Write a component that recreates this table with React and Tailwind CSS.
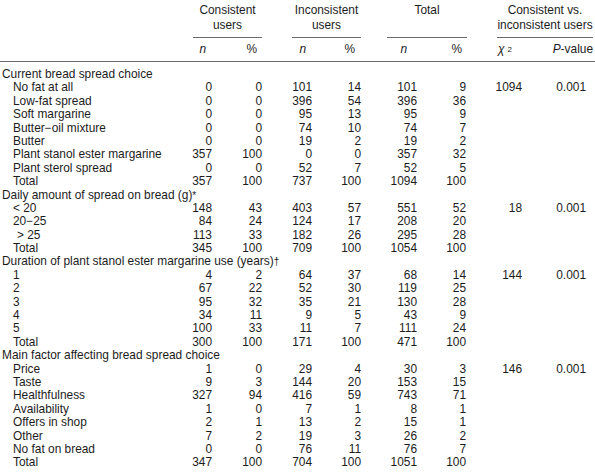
import React from 'react';

// shared column template: label + 8 data columns + right gutter
const ROW = 'grid grid-cols-[165px_47px_50px_50px_49px_56px_49px_56px_64px_9px]';

const sections = [
    {
        title: 'Current bread spread choice',
        rows: [
            ['No fat at all', 0, 0, 101, 14, 101, 9, 1094, '0.001'],
            ['Low-fat spread', 0, 0, 396, 54, 396, 36],
            ['Soft margarine', 0, 0, 95, 13, 95, 9],
            ['Butter\u2212oil mixture', 0, 0, 74, 10, 74, 7],
            ['Butter', 0, 0, 19, 2, 19, 2],
            ['Plant stanol ester margarine', 357, 100, 0, 0, 357, 32],
            ['Plant sterol spread', 0, 0, 52, 7, 52, 5],
            ['Total', 357, 100, 737, 100, 1094, 100],
        ],
    },
    {
        title: 'Daily amount of spread on bread (g)',
        mark: '*',
        rows: [
            ['< 20', 148, 43, 403, 57, 551, 52, 18, '0.001'],
            ['20\u221225', 84, 24, 124, 17, 208, 20],
            ['> 25', 113, 33, 182, 26, 295, 28],
            ['Total', 345, 100, 709, 100, 1054, 100],
        ],
    },
    {
        title: 'Duration of plant stanol ester margarine use (years)',
        mark: '\u2020',
        rows: [
            ['1', 4, 2, 64, 37, 68, 14, 144, '0.001'],
            ['2', 67, 22, 52, 30, 119, 25],
            ['3', 95, 32, 35, 21, 130, 28],
            ['4', 34, 11, 9, 5, 43, 9],
            ['5', 100, 33, 11, 7, 111, 24],
            ['Total', 300, 100, 171, 100, 471, 100],
        ],
    },
    {
        title: 'Main factor affecting bread spread choice',
        rows: [
            ['Price', 1, 0, 29, 4, 30, 3, 146, '0.001'],
            ['Taste', 9, 3, 144, 20, 153, 15],
            ['Healthfulness', 327, 94, 416, 59, 743, 71],
            ['Availability', 1, 0, 7, 1, 8, 1],
            ['Offers in shop', 2, 1, 13, 2, 15, 1],
            ['Other', 7, 2, 19, 3, 26, 2],
            ['No fat on bread', 0, 0, 76, 11, 76, 7],
            ['Total', 347, 100, 704, 100, 1051, 100],
        ],
    },
];

const GroupHead = ({ lines, className }) => (
    <div className={`col-span-2 pt-[3px] pb-[4px] border-b border-[#6b6b6b] text-center leading-[15px] ${className}`}>
        {lines.map(l => <div key={l}>{l}</div>)}
    </div>
);

const App = () => {
    return (
        <div className="w-[595px] h-[476px] bg-white text-[#1c1c1c] text-[11.9px] font-['Liberation_Sans',Arial,sans-serif] overflow-hidden">
            {/* Header */}
            <div className={ROW}>
                <div />
                <GroupHead lines={['Consistent', 'users']} className="ml-[28px]" />
                <GroupHead lines={['Inconsistent', 'users']} className="ml-[30px]" />
                <GroupHead lines={['Total', '\u00a0']} className="ml-[26px] -mr-[1px]" />
                <div className="col-span-3 ml-[31px] mr-[2px] pt-[3px] pb-[4px] border-b border-[#6b6b6b] text-center leading-[15px]">
                    <div>Consistent vs.</div>
                    <div>inconsistent users</div>
                </div>
            </div>
            <div className={`${ROW} pt-[4px] pb-[4px] border-b border-[#6b6b6b] leading-[15px] text-right`}>
                <div />
                <div className="pr-[6px] italic">n</div>
                <div className="pr-[5px]">%</div>
                <div className="pr-[6px] italic">n</div>
                <div className="pr-[6px]">%</div>
                <div className="pr-[10px] italic">n</div>
                <div className="pr-[4px]">%</div>
                <div className="pr-[10px]">
                    <span className="italic">χ</span>
                    <sup className="text-[8px] ml-[3px] relative -top-[1px]">2</sup>
                </div>
                <div className="col-span-2 pr-[2px]">
                    <span className="italic">P</span>-value
                </div>
            </div>

            {/* Body */}
            <div className="pt-[6px] pb-[10px] border-b-2 border-[#9a9a9a] leading-[13.4px]">
                {sections.map(sec => (
                    <div key={sec.title}>
                        <div className="h-[13.4px] pl-[2px] whitespace-nowrap">
                            {sec.title}
                            {sec.mark && <span className="text-[10px] align-top">{sec.mark}</span>}
                        </div>
                        {sec.rows.map(([label, ...vals]) => (
                            <div key={label} className={`${ROW} h-[13.4px] text-right`}>
                                <div className={`text-left whitespace-nowrap ${label === '> 25' ? 'pl-[17px]' : 'pl-[13px]'}`}>
                                    {label}
                                </div>
                                {Array.from({ length: 8 }).map((_, i) => (
                                    <div key={i}>{vals[i] ?? ''}</div>
                                ))}
                            </div>
                        ))}
                    </div>
                ))}
            </div>
        </div>
    );
};

export default App;
